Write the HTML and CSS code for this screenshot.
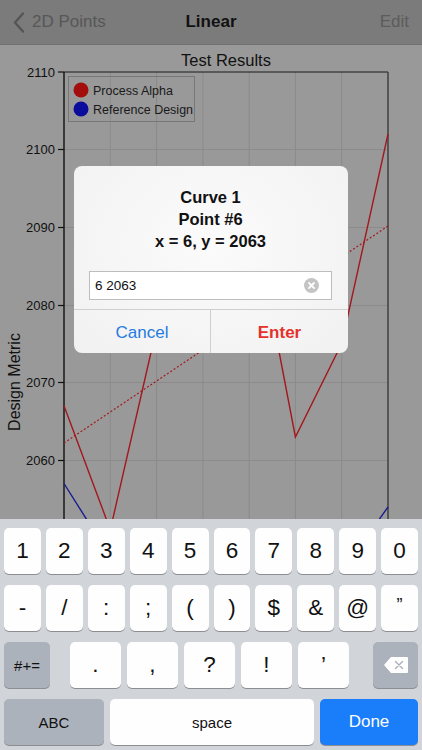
FILE: index.html
```html
<!DOCTYPE html>
<html lang="en">
<head>
    <meta charset="UTF-8">
    <meta name="viewport" content="width=device-width, initial-scale=1.0">
    <title>Linear</title>
    <link rel="stylesheet" href="styles.css">
</head>
<body>
<div class="screen">
    <header class="navbar">
        <div class="nav-back">
            <svg class="chevron" width="12" height="21" viewBox="0 0 12 21">
                <path d="M10 1.5 L2 10.5 L10 19.5" fill="none" stroke="#555" stroke-width="2.4" stroke-linecap="round" stroke-linejoin="round"/>
            </svg>
            <span>2D Points</span>
        </div>
        <div class="nav-title">Linear</div>
        <div class="nav-edit">Edit</div>
    </header>

    <main class="chart">
        <svg class="plot" width="422" height="474" viewBox="0 45 422 474">
            <text class="plot-title" x="226" y="66" text-anchor="middle">Test Results</text>

            <!-- grid -->
            <g stroke="#8b8b8b" stroke-width="1">
                <line x1="110.3" y1="72" x2="110.3" y2="519"/>
                <line x1="156.6" y1="72" x2="156.6" y2="519"/>
                <line x1="202.9" y1="72" x2="202.9" y2="519"/>
                <line x1="249.2" y1="72" x2="249.2" y2="519"/>
                <line x1="295.4" y1="72" x2="295.4" y2="519"/>
                <line x1="341.7" y1="72" x2="341.7" y2="519"/>
                <line x1="64" y1="149.5" x2="388" y2="149.5"/>
                <line x1="64" y1="227.5" x2="388" y2="227.5"/>
                <line x1="64" y1="305.5" x2="388" y2="305.5"/>
                <line x1="64" y1="382.5" x2="388" y2="382.5"/>
                <line x1="64" y1="460.5" x2="388" y2="460.5"/>
            </g>

            <!-- axes -->
            <line x1="64" y1="72" x2="388" y2="72" stroke="#1a1a1a" stroke-width="1.2"/>
            <line x1="64" y1="72" x2="64" y2="519" stroke="#111" stroke-width="1.4"/>
            <line x1="388" y1="72" x2="388" y2="519" stroke="#3a3a3a" stroke-width="1.4"/>
            <g stroke="#111" stroke-width="1.2">
                <line x1="58" y1="72" x2="64" y2="72"/>
                <line x1="58" y1="149.5" x2="64" y2="149.5"/>
                <line x1="58" y1="227.5" x2="64" y2="227.5"/>
                <line x1="58" y1="305.5" x2="64" y2="305.5"/>
                <line x1="58" y1="382.5" x2="64" y2="382.5"/>
                <line x1="58" y1="460.5" x2="64" y2="460.5"/>
            </g>
            <g class="tick" text-anchor="end">
                <text x="55" y="77">2110</text>
                <text x="55" y="154">2100</text>
                <text x="55" y="232">2090</text>
                <text x="55" y="310">2080</text>
                <text x="55" y="387">2070</text>
                <text x="55" y="465">2060</text>
            </g>
            <text class="axis-label" transform="translate(20 382) rotate(-90)" text-anchor="middle">Design Metric</text>

            <!-- series -->
            <polyline fill="none" stroke="#a3181c" stroke-width="1.4"
                points="64,405.7 110.3,529.8 156.6,328 202.9,242.6 249.2,196 295.4,437 341.7,343.6 388,134"/>
            <polyline fill="none" stroke="#1c1c90" stroke-width="1.4"
                points="64,483.5 110.3,557 156.6,612 202.9,588 249.2,627 295.4,596 341.7,572 388,507"/>
            <line x1="64" y1="443" x2="388" y2="226" stroke="#a3181c" stroke-width="1.2" stroke-dasharray="2 2"/>

            <!-- legend -->
            <rect x="68.5" y="76.5" width="126" height="45" fill="none" stroke="#777" stroke-width="1"/>
            <circle cx="81" cy="90" r="7.5" fill="#a30d0d"/>
            <circle cx="81" cy="109" r="7.5" fill="#0c0c9c"/>
            <text class="legend" x="93" y="95">Process Alpha</text>
            <text class="legend" x="93" y="114">Reference Design</text>
        </svg>
    </main>

    <section class="keyboard">
        <div class="row row-digits">
            <div class="key">1</div><div class="key">2</div><div class="key">3</div><div class="key">4</div><div class="key">5</div>
            <div class="key">6</div><div class="key">7</div><div class="key">8</div><div class="key">9</div><div class="key">0</div>
        </div>
        <div class="row row-digits">
            <div class="key">-</div><div class="key">/</div><div class="key">:</div><div class="key">;</div><div class="key">(</div>
            <div class="key">)</div><div class="key">$</div><div class="key">&amp;</div><div class="key">@</div><div class="key quote">&#8221;</div>
        </div>
        <div class="row row-punct">
            <div class="key special small">#+=</div>
            <div class="punct">
                <div class="key">.</div><div class="key">,</div><div class="key">?</div><div class="key">!</div><div class="key">&#8217;</div>
            </div>
            <div class="key special">
                <svg width="26" height="18" viewBox="0 0 26 18">
                    <path d="M8 1 H24 Q25 1 25 2 V16 Q25 17 24 17 H8 L1 9 Z" fill="#fff"/>
                    <path d="M12.5 5.5 L19.5 12.5 M19.5 5.5 L12.5 12.5" stroke="#a9afb8" stroke-width="1.4" stroke-linecap="round"/>
                </svg>
            </div>
        </div>
        <div class="row row-bottom">
            <div class="key special small">ABC</div>
            <div class="key small">space</div>
            <div class="key done">Done</div>
        </div>
    </section>

    <div class="alert">
        <div class="alert-body">
            <div class="alert-title">Curve 1<br>Point #6<br>x = 6, y = 2063</div>
            <div class="alert-field">
                <span>6 2063</span>
                <svg width="15" height="15" viewBox="0 0 15 15">
                    <circle cx="7.5" cy="7.5" r="7.5" fill="#c4c4c4"/>
                    <path d="M5 5 L10 10 M10 5 L5 10" stroke="#fff" stroke-width="1.8" stroke-linecap="round"/>
                </svg>
            </div>
        </div>
        <div class="alert-buttons">
            <div class="alert-btn cancel">Cancel</div>
            <div class="alert-btn enter">Enter</div>
        </div>
    </div>
</div>
</body>
</html>
```

FILE: styles.css
```css
body {
    margin: 0;
    font-family: "Liberation Sans", Arial, sans-serif;
    background: #999;
}
.screen {
    position: relative;
    width: 422px;
    height: 750px;
    display: flex;
    flex-direction: column;
    overflow: hidden;
}
.navbar {
    height: 44px;
    flex: none;
    display: flex;
    align-items: center;
    justify-content: space-between;
    padding: 0 13px 0 13px;
    background: #7b7b7b;
    border-bottom: 1px solid #707070;
    position: relative;
}
.nav-back {
    display: flex;
    align-items: center;
    gap: 7px;
    color: #575757;
    font-size: 17px;
}
.chevron {
    display: block;
}
.nav-title {
    position: absolute;
    left: 0;
    right: 0;
    text-align: center;
    font-size: 17px;
    font-weight: bold;
    color: #111;
    pointer-events: none;
}
.nav-edit {
    color: #5c5c5c;
    font-size: 17px;
}
.chart {
    flex: 1;
    background: #999;
    overflow: hidden;
}
.plot {
    display: block;
}
.plot-title {
    font-size: 16.5px;
    fill: #111;
}
.tick {
    font-size: 13px;
    fill: #111;
}
.axis-label {
    font-size: 16px;
    fill: #111;
}
.legend {
    font-size: 12.5px;
    fill: #1a1a1a;
}
.keyboard {
    height: 231px;
    box-sizing: border-box;
    flex: none;
    background: #d1d4d9;
    padding: 9px 4px 0;
    display: flex;
    flex-direction: column;
    gap: 11px;
}
.row {
    height: 46px;
    flex: none;
    display: grid;
    gap: 5px;
}
.row-digits {
    grid-template-columns: repeat(10, 1fr);
}
.row-punct {
    grid-template-columns: 46px 1fr 45px;
    gap: 0;
}
.punct {
    display: grid;
    grid-template-columns: repeat(5, 1fr);
    gap: 6px;
    padding: 0 24px 0 20px;
}
.row-bottom {
    grid-template-columns: 100px 1fr 98px;
    gap: 6px;
}
.key {
    background: #fefefe;
    border-radius: 5px;
    box-shadow: 0 1px 0 #8c8e92;
    display: flex;
    align-items: center;
    justify-content: center;
    font-size: 22.5px;
    color: #111;
}
.key.quote {
    font-size: 18px;
    align-items: flex-start;
    padding-top: 10px;
}
.key.special {
    background: #acb2bb;
}
.key.small {
    font-size: 15px;
}
.key.done {
    background: #1a7dfa;
    color: #fff;
    font-size: 17px;
}
.alert {
    position: absolute;
    left: 74px;
    top: 166px;
    width: 274px;
    background: radial-gradient(ellipse at 50% 40%, #fbfbfb 0%, #f1f1f1 100%);
    border-radius: 8px;
    overflow: hidden;
}
.alert-body {
    padding: 20px 16px 9px 15px;
}
.alert-title {
    text-align: center;
    font-weight: bold;
    font-size: 16.5px;
    line-height: 22px;
    color: #111;
}
.alert-field {
    margin-top: 19px;
    height: 27px;
    background: #fff;
    border: 1px solid #bdbdbd;
    display: flex;
    align-items: center;
    justify-content: space-between;
    padding: 0 12px 0 5px;
    font-size: 13.5px;
    color: #111;
}
.alert-field svg {
    display: block;
}
.alert-buttons {
    display: grid;
    grid-template-columns: 137px 1fr;
    border-top: 1px solid #cfcfcf;
    height: 43px;
}
.alert-btn {
    display: flex;
    align-items: center;
    justify-content: center;
    padding-top: 2px;
    font-size: 17px;
}
.cancel {
    color: #1f7be2;
    border-right: 1px solid #cfcfcf;
}
.enter {
    color: #e5312b;
    font-weight: bold;
}
```
